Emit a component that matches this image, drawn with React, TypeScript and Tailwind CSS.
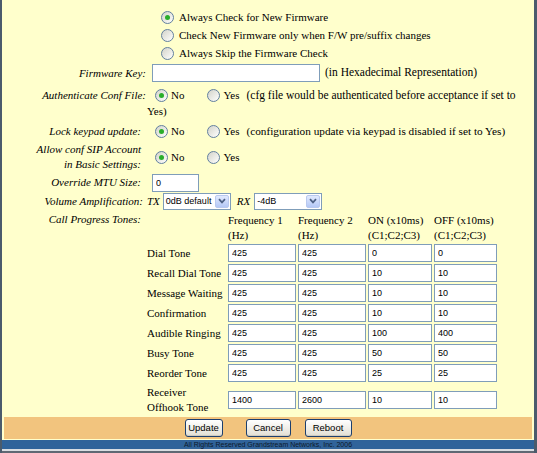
import type { ReactNode } from "react";

const tones = [
  { name: "Dial Tone", f1: "425", f2: "425", on: "0", off: "0" },
  { name: "Recall Dial Tone", f1: "425", f2: "425", on: "10", off: "10" },
  { name: "Message Waiting", f1: "425", f2: "425", on: "10", off: "10" },
  { name: "Confirmation", f1: "425", f2: "425", on: "10", off: "10" },
  { name: "Audible Ringing", f1: "425", f2: "425", on: "100", off: "400" },
  { name: "Busy Tone", f1: "425", f2: "425", on: "50", off: "50" },
  { name: "Reorder Tone", f1: "425", f2: "425", on: "25", off: "25" },
];

function Radio({ checked = false }: { checked?: boolean }) {
  return (
    <span className="inline-flex h-[13px] w-[13px] shrink-0 items-center justify-center rounded-full border border-[#62809f] bg-linear-to-br from-[#d3d3c9] to-white">
      {checked && <span className="h-[5px] w-[5px] rounded-full bg-[#2aae2a]" />}
    </span>
  );
}

function TextBox({ value = "", className = "" }: { value?: string; className?: string }) {
  return (
    <input
      readOnly
      value={value}
      className={
        "h-[18px] border border-[#7f9db9] bg-white px-[3px] [font-family:Liberation_Sans,Arial,sans-serif] text-[9px] text-black outline-none " +
        className
      }
    />
  );
}

function DropDown({ value }: { value: string }) {
  return (
    <div className="flex h-[17px] w-[68px] items-center border border-[#7f9db9] bg-white pl-[2px]">
      <span className="flex-1 [font-family:Liberation_Sans,Arial,sans-serif] text-[9px] leading-none text-black">{value}</span>
      <span className="mr-px flex h-[13px] w-[14px] items-center justify-center rounded-[2px] border border-[#b9c9ef] bg-linear-to-b from-[#e2eafe] to-[#b4c8f6]">
        <svg width="8" height="6" viewBox="0 0 8 6">
          <path d="M1 1.2 L4 4.4 L7 1.2" stroke="#4d6185" strokeWidth="1.7" fill="none" />
        </svg>
      </span>
    </div>
  );
}

function Btn({ children, className = "" }: { children: ReactNode; className?: string }) {
  return (
    <button
      className={
        "h-[18px] rounded-[3px] border border-[#1c3f6e] bg-linear-to-b from-white to-[#e2dfd4] [font-family:Liberation_Sans,Arial,sans-serif] text-[9.5px] leading-none text-black shadow-[inset_0_-1px_0_#cfcbbf] " +
        className
      }
    >
      {children}
    </button>
  );
}

function Label({ children, className = "" }: { children: ReactNode; className?: string }) {
  return <div className={"text-right italic " + className}>{children}</div>;
}

function YesNo({ checkedNo = true }: { checkedNo?: boolean }) {
  return (
    <>
      <span className="ml-[8px] flex">
        <Radio checked={checkedNo} />
      </span>
      <span className="ml-[3px]">No</span>
      <span className="ml-[23px] flex">
        <Radio checked={!checkedNo} />
      </span>
      <span className="ml-[3px]">Yes</span>
    </>
  );
}

export default function App() {
  return (
    <div className="h-[453px] w-[537px] overflow-hidden bg-[#d9dde2]">
      <div className="flex h-[453px] w-[537px] flex-col border-l-2 border-r-[3px] border-[#4b5b6c] bg-[#ffffcc] [font-family:Liberation_Serif,Times_New_Roman,serif] text-[11px] text-black">
        {/* Form */}
        <div className="grid h-[417px] grid-cols-[145px_1fr] content-start pt-[8px]">
          {/* Firmware check options */}
          <div />
          <div className="flex flex-col">
            {[
              { t: "Always Check for New Firmware", c: true },
              { t: "Check New Firmware only when F/W pre/suffix changes", c: false },
              { t: "Always Skip the Firmware Check", c: false },
            ].map((o) => (
              <div key={o.t} className="flex h-[18px] items-center pl-[14px]">
                <Radio checked={o.c} />
                <span className="ml-[5px]">{o.t}</span>
              </div>
            ))}
          </div>

          <Label className="flex h-[22px] items-center justify-end pr-px">Firmware Key:</Label>
          <div className="flex h-[22px] items-center">
            <TextBox className="ml-[5px] w-[168px]" />
            <span className="ml-[5px] text-[11.5px]">(in Hexadecimal Representation)</span>
          </div>

          <Label className="h-[37px] pr-px pt-[3px] leading-[16px]">Authenticate Conf File:</Label>
          <div className="h-[37px] pt-[3px] leading-[16px]">
            <div className="flex h-[16px] items-center whitespace-nowrap">
              <YesNo />
              <span className="ml-[7px] text-[11.5px]">(cfg file would be authenticated before acceptance if set to</span>
            </div>
            <div className="h-[16px]">Yes)</div>
          </div>

          <Label className="flex h-[20px] items-center justify-end pr-[6px]">Lock keypad update:</Label>
          <div className="flex h-[20px] items-center whitespace-nowrap">
            <YesNo />
            <span className="ml-[7px] text-[11.25px]">(configuration update via keypad is disabled if set to Yes)</span>
          </div>

          <Label className="flex h-[32px] flex-col justify-center pr-[6px] leading-[15px]">
            <span>Allow conf SIP Account</span>
            <span>in Basic Settings:</span>
          </Label>
          <div className="flex h-[32px] items-center">
            <YesNo />
          </div>

          <Label className="flex h-[19px] items-center justify-end pr-[6px]">Override MTU Size:</Label>
          <div className="flex h-[19px] items-center">
            <TextBox value="0" className="ml-[5px] w-[47px]" />
          </div>

          <Label className="flex h-[18px] items-center justify-end pr-[4px]">Volume Amplification:</Label>
          <div className="flex h-[18px] items-center">
            <span className="italic">TX</span>
            <span className="ml-[3px]">
              <DropDown value="0dB default" />
            </span>
            <span className="ml-[6px] italic">RX</span>
            <span className="ml-[4px]">
              <DropDown value="-4dB" />
            </span>
          </div>

          <Label className="pr-[6px] pt-px leading-[16px]">Call Progress Tones:</Label>
          <div className="grid grid-cols-[81px_70px_70px_66px_64px]">
            {/* Header */}
            <div className="h-[33px]" />
            {[
              ["Frequency 1", "(Hz)"],
              ["Frequency 2", "(Hz)"],
              ["ON (x10ms)", "(C1;C2;C3)"],
              ["OFF (x10ms)", "(C1;C2;C3)"],
            ].map(([a, b]) => (
              <div key={a} className="flex h-[33px] flex-col whitespace-nowrap pt-[3px] leading-[15px]">
                <span>{a}</span>
                <span>{b}</span>
              </div>
            ))}

            {tones.map((t) => (
              <div key={t.name} className="contents">
                <div className="flex h-[20px] items-center whitespace-nowrap">{t.name}</div>
                <div className="flex h-[20px] items-center">
                  <TextBox value={t.f1} className="w-[68px]" />
                </div>
                <div className="flex h-[20px] items-center">
                  <TextBox value={t.f2} className="w-[68px]" />
                </div>
                <div className="flex h-[20px] items-center">
                  <TextBox value={t.on} className="w-[64px]" />
                </div>
                <div className="flex h-[20px] items-center">
                  <TextBox value={t.off} className="w-[63px]" />
                </div>
              </div>
            ))}

            <div className="flex h-[33px] flex-col justify-center leading-[15px]">
              <span>Receiver</span>
              <span>Offhook Tone</span>
            </div>
            <div className="flex h-[33px] items-center">
              <TextBox value="1400" className="w-[68px]" />
            </div>
            <div className="flex h-[33px] items-center">
              <TextBox value="2600" className="w-[68px]" />
            </div>
            <div className="flex h-[33px] items-center">
              <TextBox value="10" className="w-[64px]" />
            </div>
            <div className="flex h-[33px] items-center">
              <TextBox value="10" className="w-[63px]" />
            </div>
          </div>
        </div>

        {/* Action bar */}
        <div className="mx-[2px] flex h-[22px] shrink-0 items-center justify-center bg-[#f2c47e]">
          <Btn className="w-[38px]">Update</Btn>
          <Btn className="ml-[23px] w-[45px]">Cancel</Btn>
          <Btn className="ml-[14px] w-[47px]">Reboot</Btn>
        </div>
        <div className="h-px shrink-0" />

        {/* Footer */}
        <div className="flex h-[9px] shrink-0 items-center justify-center bg-[#30639a] [font-family:Liberation_Sans,Arial,sans-serif] text-[7px] leading-none text-[#0d1a2a]">
          All Rights Reserved Grandstream Networks, Inc. 2006
        </div>
        <div className="h-[2px] shrink-0 bg-[#d9dde2]" />
        <div className="h-[2px] shrink-0 bg-[#5f6873]" />
      </div>
    </div>
  );
}
